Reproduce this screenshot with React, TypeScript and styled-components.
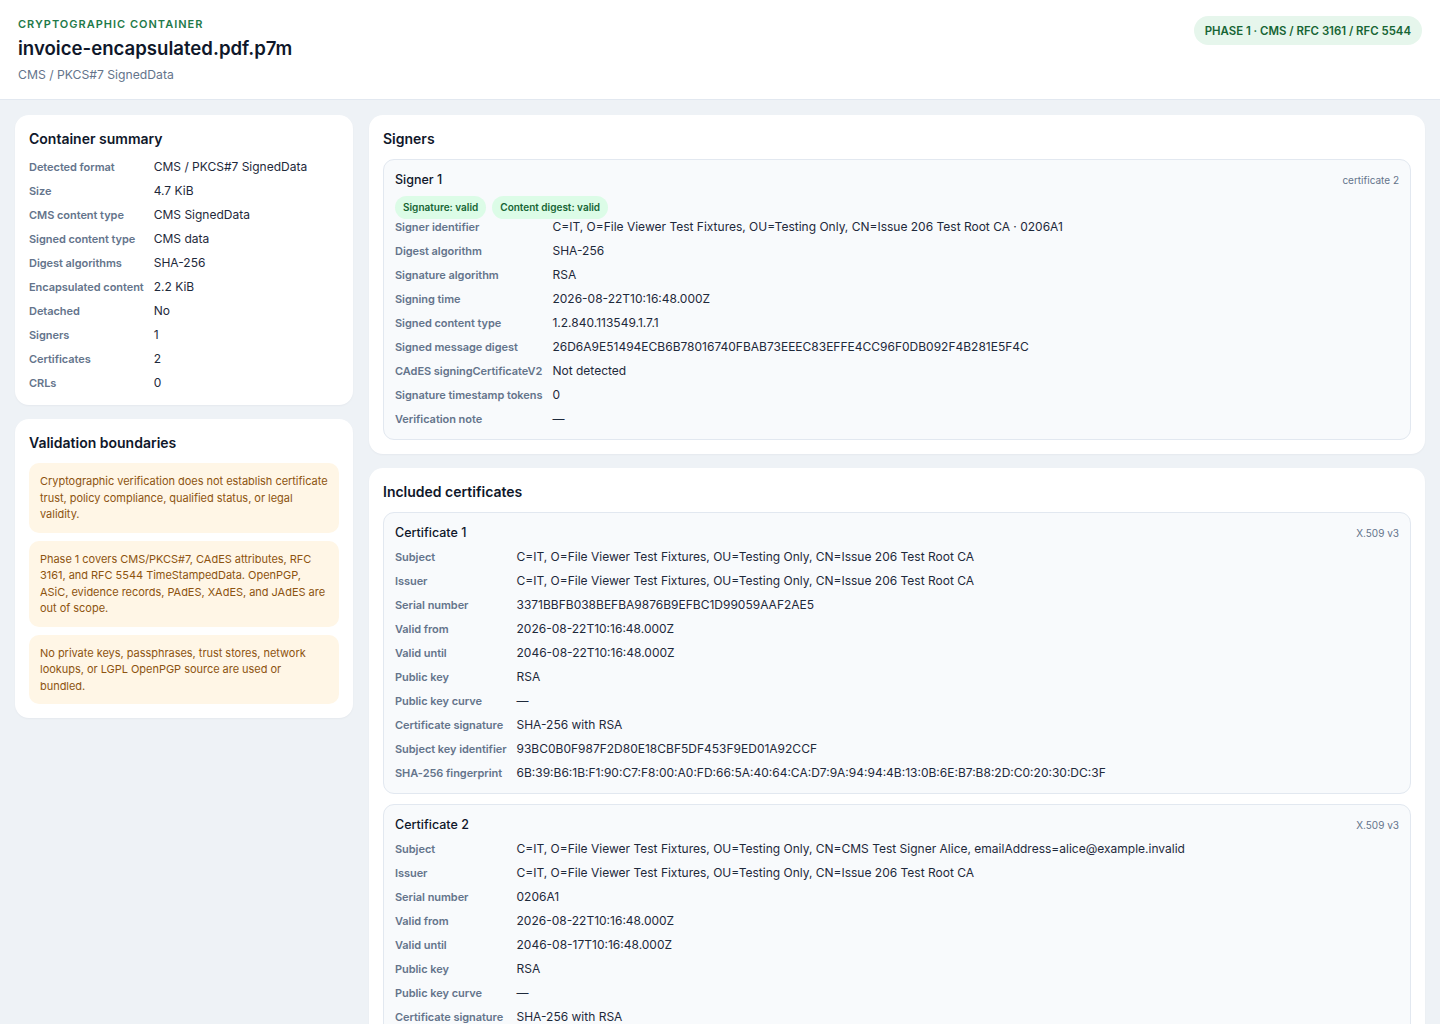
import React from 'react';
import styled, { createGlobalStyle } from 'styled-components';

type Field = [string, string];

const summary: Field[] = [
  ['Detected format', 'CMS / PKCS#7 SignedData'],
  ['Size', '4.7 KiB'],
  ['CMS content type', 'CMS SignedData'],
  ['Signed content type', 'CMS data'],
  ['Digest algorithms', 'SHA-256'],
  ['Encapsulated content', '2.2 KiB'],
  ['Detached', 'No'],
  ['Signers', '1'],
  ['Certificates', '2'],
  ['CRLs', '0'],
];

// line breaks follow the reference wrapping
const notes: string[][] = [
  [
    'Cryptographic verification does not establish certificate',
    'trust, policy compliance, qualified status, or legal',
    'validity.',
  ],
  [
    'Phase 1 covers CMS/PKCS#7, CAdES attributes, RFC',
    '3161, and RFC 5544 TimeStampedData. OpenPGP,',
    'ASiC, evidence records, PAdES, XAdES, and JAdES are',
    'out of scope.',
  ],
  [
    'No private keys, passphrases, trust stores, network',
    'lookups, or LGPL OpenPGP source are used or',
    'bundled.',
  ],
];

const signerFields: Field[] = [
  ['Signer identifier', 'C=IT, O=File Viewer Test Fixtures, OU=Testing Only, CN=Issue 206 Test Root CA · 0206A1'],
  ['Digest algorithm', 'SHA-256'],
  ['Signature algorithm', 'RSA'],
  ['Signing time', '2026-08-22T10:16:48.000Z'],
  ['Signed content type', '1.2.840.113549.1.7.1'],
  ['Signed message digest', '26D6A9E51494ECB6B78016740FBAB73EEEC83EFFE4CC96F0DB092F4B281E5F4C'],
  ['CAdES signingCertificateV2', 'Not detected'],
  ['Signature timestamp tokens', '0'],
  ['Verification note', '—'],
];

const rootDn = 'C=IT, O=File Viewer Test Fixtures, OU=Testing Only, CN=Issue 206 Test Root CA';

const certificates: { title: string; fields: Field[] }[] = [
  {
    title: 'Certificate 1',
    fields: [
      ['Subject', rootDn],
      ['Issuer', rootDn],
      ['Serial number', '3371BBFB038BEFBA9876B9EFBC1D99059AAF2AE5'],
      ['Valid from', '2026-08-22T10:16:48.000Z'],
      ['Valid until', '2046-08-22T10:16:48.000Z'],
      ['Public key', 'RSA'],
      ['Public key curve', '—'],
      ['Certificate signature', 'SHA-256 with RSA'],
      ['Subject key identifier', '93BC0B0F987F2D80E18CBF5DF453F9ED01A92CCF'],
      ['SHA-256 fingerprint', '6B:39:B6:1B:F1:90:C7:F8:00:A0:FD:66:5A:40:64:CA:D7:9A:94:94:4B:13:0B:6E:B7:B8:2D:C0:20:30:DC:3F'],
    ],
  },
  {
    title: 'Certificate 2',
    fields: [
      ['Subject', 'C=IT, O=File Viewer Test Fixtures, OU=Testing Only, CN=CMS Test Signer Alice, emailAddress=alice@example.invalid'],
      ['Issuer', rootDn],
      ['Serial number', '0206A1'],
      ['Valid from', '2026-08-22T10:16:48.000Z'],
      ['Valid until', '2046-08-17T10:16:48.000Z'],
      ['Public key', 'RSA'],
      ['Public key curve', '—'],
      ['Certificate signature', 'SHA-256 with RSA'],
      ['Subject key identifier', '5F0A7C21D93E4B6A0C88F1E2B7D4A95C3E61F0B2'],
      ['SHA-256 fingerprint', 'A4:1C:7E:92:3B:D0:58:F6:11:C2:9A:47:E3:05:BD:6F:82:19:CE:74:0D:A9:36:5B:E8:F1:2C:90:47:DA:63:B5'],
    ],
  },
];

const GlobalStyle = createGlobalStyle`
  * { box-sizing: border-box; }
  body {
    margin: 0;
    background: #eef2f6;
    font-family: Inter, "Noto Sans", "Liberation Sans", sans-serif;
    color: #0f172a;
    -webkit-font-smoothing: antialiased;
  }
`;

const Page = styled.div`
  min-height: 1024px;
  background: #eef2f6;
`;

const Header = styled.header`
  display: flex;
  justify-content: space-between;
  align-items: flex-start;
  padding: 16px 18px 15px;
  background: #ffffff;
  border-bottom: 1px solid #e2e8f0;
`;

const HeaderText = styled.div`
  display: flex;
  flex-direction: column;
`;

const Eyebrow = styled.div`
  font-size: 11px;
  line-height: 16px;
  font-weight: 600;
  letter-spacing: 1px;
  text-transform: uppercase;
  color: #1f7a4a;
`;

const Title = styled.h1`
  margin: 4px 0 0;
  font-size: 18.6px;
  line-height: 24px;
  font-weight: 600;
  color: #0f172a;
`;

const Subtitle = styled.div`
  margin-top: 6px;
  font-size: 12.2px;
  line-height: 18px;
  color: #64748b;
`;

const PhaseBadge = styled.div`
  height: 29px;
  display: flex;
  align-items: center;
  padding: 0 11px;
  border-radius: 999px;
  background: #e6f6ec;
  color: #166534;
  font-size: 11.4px;
  font-weight: 600;
  white-space: nowrap;
`;

const Main = styled.main`
  display: grid;
  grid-template-columns: 338px 1fr;
  gap: 16px;
  padding: 15px 15px 16px;
  align-items: start;
`;

const Column = styled.div`
  display: flex;
  flex-direction: column;
  gap: 14px;
  min-width: 0;
`;

const Card = styled.section`
  background: #ffffff;
  border-radius: 14px;
  padding: 14px;
  box-shadow: 0 1px 2px rgba(15, 23, 42, 0.04);
`;

const CardTitle = styled.h2`
  margin: 0 0 10px;
  font-size: 14px;
  line-height: 20px;
  font-weight: 600;
  color: #0f172a;
`;

const FieldGrid = styled.dl`
  margin: 0;
  display: grid;
  grid-template-columns: max-content 1fr;
  column-gap: 10px;
  row-gap: 8px;
`;

const Label = styled.dt`
  font-size: 11px;
  line-height: 16px;
  font-weight: 600;
  letter-spacing: -0.05px;
  color: #64748b;
  white-space: nowrap;
`;

const Value = styled.dd`
  margin: 0;
  font-size: 12px;
  line-height: 16px;
  color: #1e293b;
  white-space: nowrap;
`;

const Notes = styled.div`
  display: flex;
  flex-direction: column;
  gap: 8px;
`;

const Note = styled.p`
  margin: 0;
  padding: 10px 6px 10px 11px;
  background: #fff6e6;
  border-radius: 10px;
  font-size: 11px;
  line-height: 16.5px;
  letter-spacing: -0.03px;
  color: #8d5410;
  white-space: pre-line;
`;

const Stack = styled.div`
  display: flex;
  flex-direction: column;
  gap: 10px;
`;

const Box = styled.div`
  background: #f8fafc;
  border: 1px solid #e2e8f0;
  border-radius: 11px;
  padding: 11px 11px 12px;
`;

const BoxHead = styled.div`
  display: flex;
  justify-content: space-between;
  align-items: center;
  margin-bottom: 8px;
`;

const BoxTitle = styled.div`
  font-size: 12.5px;
  line-height: 17px;
  font-weight: 500;
  color: #0f172a;
`;

const BoxMeta = styled.div`
  font-size: 10px;
  color: #64748b;
`;

const StatusRow = styled.div`
  display: flex;
  gap: 6px;
`;

const Status = styled.span`
  padding: 4px 8px;
  border-radius: 999px;
  background: #dcfce7;
  color: #166534;
  font-size: 10px;
  line-height: 15px;
  font-weight: 600;
`;

const Fields: React.FC<{ rows: Field[] }> = ({ rows }) => (
  <FieldGrid>
    {rows.map(([label, value]) => (
      <React.Fragment key={label}>
        <Label>{label}</Label>
        <Value>{value}</Value>
      </React.Fragment>
    ))}
  </FieldGrid>
);

export default function App() {
  return (
    <Page>
      <GlobalStyle />
      <Header>
        <HeaderText>
          <Eyebrow>Cryptographic container</Eyebrow>
          <Title>invoice-encapsulated.pdf.p7m</Title>
          <Subtitle>CMS / PKCS#7 SignedData</Subtitle>
        </HeaderText>
        <PhaseBadge>PHASE 1 · CMS / RFC 3161 / RFC 5544</PhaseBadge>
      </Header>

      <Main>
        <Column>
          <Card>
            <CardTitle>Container summary</CardTitle>
            <Fields rows={summary} />
          </Card>
          <Card>
            <CardTitle>Validation boundaries</CardTitle>
            <Notes>
              {notes.map((lines) => (
                <Note key={lines[0]}>{lines.join('\n')}</Note>
              ))}
            </Notes>
          </Card>
        </Column>

        <Column>
          <Card>
            <CardTitle>Signers</CardTitle>
            <Box>
              <BoxHead>
                <BoxTitle>Signer 1</BoxTitle>
                <BoxMeta>certificate 2</BoxMeta>
              </BoxHead>
              <StatusRow>
                <Status>Signature: valid</Status>
                <Status>Content digest: valid</Status>
              </StatusRow>
              <Fields rows={signerFields} />
            </Box>
          </Card>

          <Card>
            <CardTitle>Included certificates</CardTitle>
            <Stack>
              {certificates.map((c) => (
                <Box key={c.title}>
                  <BoxHead>
                    <BoxTitle>{c.title}</BoxTitle>
                    <BoxMeta>X.509 v3</BoxMeta>
                  </BoxHead>
                  <Fields rows={c.fields} />
                </Box>
              ))}
            </Stack>
          </Card>
        </Column>
      </Main>
    </Page>
  );
}
